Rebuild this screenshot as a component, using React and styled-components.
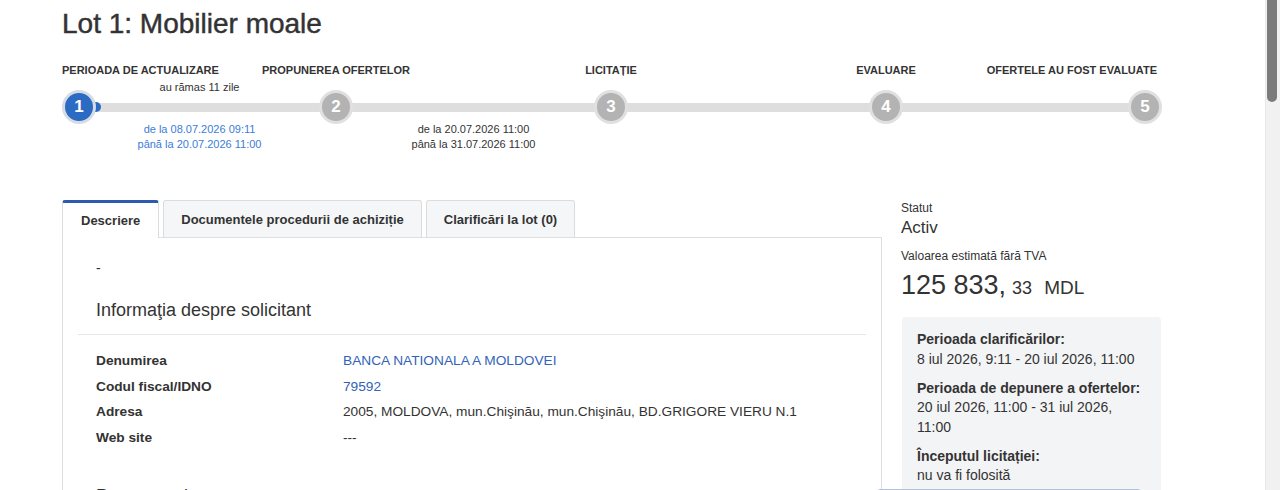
import styled, { createGlobalStyle } from "styled-components";

const GlobalStyle = createGlobalStyle`
  html, body {
    overflow: hidden;
  }
  body {
    margin: 0;
    background: #fff;
    color: #333;
    font-family: "Liberation Sans", Arial, sans-serif;
  }
`;

const Page = styled.div`
  width: 1101px;
  padding-left: 62px;
`;

const Title = styled.h1`
  margin: 0;
  padding-top: 7px;
  font-size: 28px;
  line-height: 34px;
  font-weight: 400;
  -webkit-text-stroke: 0.45px #333;
  color: #333;
`;

/* stepper: circles in the odd columns, connecting bars in the even ones */
const Stepper = styled.div`
  display: grid;
  grid-template-columns: 34px 223px 34px 241px 34px 241px 34px 225px 34px;
  grid-template-rows: 14px 13px 34px auto;
  margin-top: 22px;
`;

const StepLabel = styled.div`
  grid-row: 1;
  grid-column: ${(p) => p.$col};
  display: flex;
  justify-content: ${(p) => p.$align || "center"};
  white-space: nowrap;
  font-size: 11px;
  line-height: 14px;
  font-weight: 700;
  color: #333;
  margin-right: ${(p) => (p.$align === "flex-end" ? "5px" : "0")};
`;

const Remaining = styled.div`
  grid-row: 2;
  grid-column: 1 / 4;
  padding: 3px 16px 0 0;
  text-align: center;
  font-size: 11px;
  line-height: 14px;
  white-space: nowrap;
`;

const Circle = styled.div`
  grid-row: 3;
  grid-column: ${(p) => p.$col};
  position: relative;
  z-index: 1;
  box-sizing: border-box;
  width: 34px;
  height: 34px;
  border-radius: 50%;
  border: 3px solid ${(p) => (p.$active ? "#d7dce4" : "#e0e0e0")};
  background: ${(p) => (p.$active ? "#2c6bc4" : "#b3b3b3")};
  color: #fff;
  display: flex;
  align-items: center;
  justify-content: center;
  font-size: 17px;
  font-weight: 700;
`;

const Bar = styled.div`
  grid-row: 3;
  grid-column: ${(p) => p.$col};
  align-self: center;
  height: 9px;
  margin: 0 -3px;
  background: #dedede;
  display: flex;
`;

const BarFill = styled.div`
  width: 8px;
  height: 10px;
  margin-top: -0.5px;
  border-radius: 0 5px 5px 0;
  background: #2c6bc4;
`;

const Dates = styled.div`
  grid-row: 4;
  grid-column: ${(p) => p.$span};
  padding-right: ${(p) => p.$pr || 0}px;
  margin-top: -2px;
  text-align: center;
  font-size: 11px;
  line-height: 15px;
  white-space: nowrap;
  color: ${(p) => (p.$current ? "#3b7dd8" : "#333")};
`;

const Body = styled.div`
  display: grid;
  grid-template-columns: 820px 262px;
  column-gap: 19px;
  margin-top: 48px;
`;

const TabList = styled.div`
  display: flex;
  gap: 4px;
  height: 37px;
`;

const Tab = styled.div`
  box-sizing: border-box;
  height: ${(p) => (p.$active ? "38px" : "37px")};
  padding: 0 ${(p) => (p.$active ? 18 : 17)}px;
  display: flex;
  align-items: center;
  font-size: 13px;
  font-weight: 700;
  color: #333;
  border: 1px solid #dcdcdc;
  border-bottom: none;
  border-top: ${(p) => (p.$active ? "3px solid #2b5bb0" : "1px solid #dcdcdc")};
  border-radius: 3px 3px 0 0;
  background: ${(p) => (p.$active ? "#fff" : "#f5f6f7")};
  position: relative;
  z-index: 1;
`;

const Panel = styled.div`
  border: 1px solid #dedede;
  padding: 20px 15px 0;
  min-height: 600px;
`;

const Section = styled.div`
  padding-left: 18px;
`;

const Dash = styled.div`
  font-size: 14px;
  line-height: 20px;
  padding-left: 18px;
`;

const Heading = styled.h3`
  margin: ${(p) => p.$mt || 20}px 0 0;
  padding-left: 18px;
  font-size: 18px;
  line-height: 24px;
  font-weight: 400;
  color: #333;
`;

const Rule = styled.hr`
  margin: 12px 0 16px;
  border: none;
  border-top: 1px solid #e6e6e6;
`;

const InfoGrid = styled.dl`
  display: grid;
  grid-template-columns: 247px 1fr;
  row-gap: 5.7px;
  margin: 0;
  font-size: 13.7px;
  line-height: 20px;
`;

const Term = styled.dt`
  font-weight: 700;
`;

const Value = styled.dd`
  margin: 0;
  color: ${(p) => (p.$link ? "#3263b8" : "#333")};
`;

const Side = styled.aside`
  padding-top: 0;
`;

const SmallLabel = styled.div`
  font-size: 12px;
  line-height: 16px;
  margin-top: ${(p) => p.$mt || 0}px;
`;

const Status = styled.div`
  font-size: 17px;
  line-height: 22px;
  margin-top: 1px;
`;

const Price = styled.div`
  margin-top: 5px;
  font-size: 27px;
  line-height: 32px;
  white-space: nowrap;
`;

const Cents = styled.span`
  font-size: 18px;
  margin-left: 6px;
`;

const Currency = styled.span`
  font-size: 19px;
  margin-left: 12px;
`;

const DeadlineBox = styled.div`
  margin: 13px 0 0 1px;
  width: 259px;
  box-sizing: border-box;
  padding: 13px 15px;
  background: #f3f4f6;
  border-radius: 4px;
  font-size: 14px;
  line-height: 19.5px;
`;

const Deadline = styled.div`
  & + & {
    margin-top: 9.5px;
  }
`;

const DeadlineTitle = styled.div`
  font-weight: 700;
`;

/* floating action bar pinned to the bottom of the viewport */
const FloatingBar = styled.div`
  position: fixed;
  top: 489px;
  left: 876px;
  width: 264px;
  height: 40px;
  border: 1px solid #b3c1d9;
  border-radius: 4px;
  background: #fff;
  z-index: 5;
`;

/* window scrollbar, page scrolled to the top */
const ScrollTrack = styled.div`
  position: fixed;
  top: 0;
  right: 0;
  width: 14px;
  height: 100vh;
  background: #f1f1f1;
  border-left: 1px solid #e8e8e8;
  z-index: 10;
`;

const ScrollThumb = styled.div`
  width: 10px;
  height: 102px;
  margin-left: 1px;
  background: #7b7b7b;
  border-radius: 0 0 5px 5px;
`;

const steps = [
  { col: 1, n: 1, label: "PERIOADA DE ACTUALIZARE", align: "flex-start", active: true },
  { col: 3, n: 2, label: "PROPUNEREA OFERTELOR" },
  { col: 5, n: 3, label: "LICITAȚIE" },
  { col: 7, n: 4, label: "EVALUARE" },
  { col: 9, n: 5, label: "OFERTELE AU FOST EVALUATE", align: "flex-end" },
];

const applicant = [
  { term: "Denumirea", value: "BANCA NATIONALA A MOLDOVEI", link: true },
  { term: "Codul fiscal/IDNO", value: "79592", link: true },
  { term: "Adresa", value: "2005, MOLDOVA, mun.Chişinău, mun.Chişinău, BD.GRIGORE VIERU N.1" },
  { term: "Web site", value: "---" },
];

const deadlines = [
  { title: "Perioada clarificărilor:", value: "8 iul 2026, 9:11 - 20 iul 2026, 11:00" },
  { title: "Perioada de depunere a ofertelor:", value: "20 iul 2026, 11:00 - 31 iul 2026, 11:00" },
  { title: "Începutul licitației:", value: "nu va fi folosită" },
];

export default function App() {
  return (
    <>
      <GlobalStyle />
      <Page>
        <Title>Lot 1: Mobilier moale</Title>

        <Stepper>
          {steps.map((s) => (
            <StepLabel key={s.n} $col={s.col} $align={s.align}>
              {s.label}
            </StepLabel>
          ))}
          <Remaining>au rămas 11 zile</Remaining>
          {steps.map((s) => (
            <Circle key={s.n} $col={s.col} $active={s.active}>
              {s.n}
            </Circle>
          ))}
          <Bar $col={2}>
            <BarFill />
          </Bar>
          <Bar $col={4} />
          <Bar $col={6} />
          <Bar $col={8} />
          <Dates $span="1 / 4" $pr={16} $current>
            de la 08.07.2026 09:11
            <br />
            până la 20.07.2026 11:00
          </Dates>
          <Dates $span="3 / 6">
            de la 20.07.2026 11:00
            <br />
            până la 31.07.2026 11:00
          </Dates>
        </Stepper>

        <Body>
          <main>
            <TabList>
              <Tab $active>Descriere</Tab>
              <Tab>Documentele procedurii de achiziție</Tab>
              <Tab>Clarificări la lot (0)</Tab>
            </TabList>
            <Panel>
              <Dash>-</Dash>
              <Heading>Informaţia despre solicitant</Heading>
              <Rule />
              <Section>
                <InfoGrid>
                  {applicant.map((row) => [
                    <Term key={row.term}>{row.term}</Term>,
                    <Value key={row.term + "-v"} $link={row.link}>
                      {row.value}
                    </Value>,
                  ])}
                </InfoGrid>
              </Section>
              <Heading $mt={36}>Persoana de contact</Heading>
            </Panel>
          </main>

          <Side>
            <SmallLabel>Statut</SmallLabel>
            <Status>Activ</Status>
            <SmallLabel $mt={9}>Valoarea estimată fără TVA</SmallLabel>
            <Price>
              125 833,<Cents>33</Cents>
              <Currency>MDL</Currency>
            </Price>
            <DeadlineBox>
              {deadlines.map((d) => (
                <Deadline key={d.title}>
                  <DeadlineTitle>{d.title}</DeadlineTitle>
                  <div>{d.value}</div>
                </Deadline>
              ))}
            </DeadlineBox>
          </Side>
        </Body>
      </Page>
      <FloatingBar />
      <ScrollTrack>
        <ScrollThumb />
      </ScrollTrack>
    </>
  );
}
